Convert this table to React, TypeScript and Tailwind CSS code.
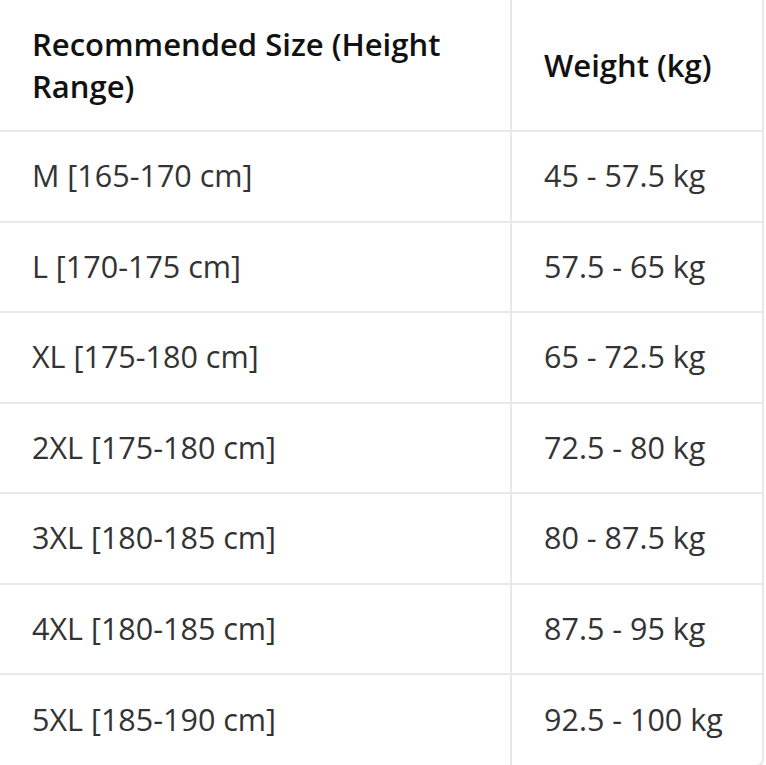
import React from 'react';

const rows: [string, string][] = [
  ['M [165-170 cm]', '45 - 57.5 kg'],
  ['L [170-175 cm]', '57.5 - 65 kg'],
  ['XL [175-180 cm]', '65 - 72.5 kg'],
  ['2XL [175-180 cm]', '72.5 - 80 kg'],
  ['3XL [180-185 cm]', '80 - 87.5 kg'],
  ['4XL [180-185 cm]', '87.5 - 95 kg'],
  ['5XL [185-190 cm]', '92.5 - 100 kg'],
];

const App: React.FC = () => {
  return (
    <div className="min-h-screen bg-white font-['Open_Sans',sans-serif]">
      <div className="w-[764px] overflow-hidden rounded-br-lg border-r-2 border-b-2 border-[#e8e8e8]">
        <table className="w-full border-collapse text-[30.5px] text-[#333]">
          <thead>
            <tr className="h-[131px] border-b-2 border-[#e8e8e8]">
              <th className="w-[511px] border-r-2 border-[#e8e8e8] px-8 text-left align-middle text-[31px] font-semibold leading-[42px] text-[#111]">
                Recommended Size (Height Range)
              </th>
              <th className="px-8 text-left align-middle text-[31px] font-semibold text-[#111]">
                Weight (kg)
              </th>
            </tr>
          </thead>
          <tbody>
            {rows.map(([size, weight], i) => (
              <tr
                key={size}
                className={`h-[90.5px] ${i < rows.length - 1 ? 'border-b-2 border-[#e8e8e8]' : ''}`}
              >
                <td className="border-r-2 border-[#e8e8e8] px-8 align-middle">{size}</td>
                <td className="px-8 align-middle">{weight}</td>
              </tr>
            ))}
          </tbody>
        </table>
      </div>
    </div>
  );
};

export default App;
